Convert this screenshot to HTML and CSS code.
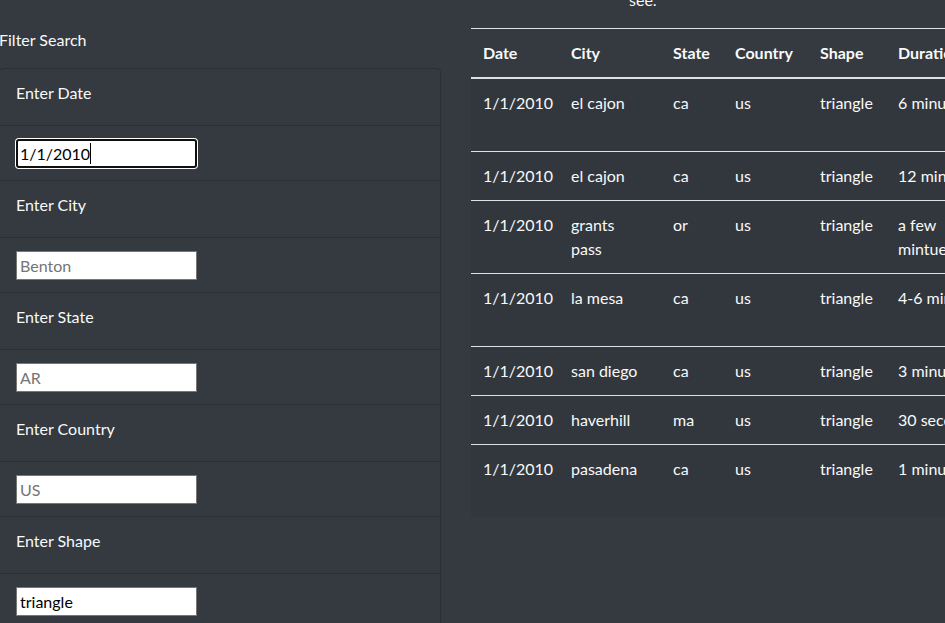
FILE: index.html
```html
<!DOCTYPE html>
<html lang="en">
<head>
<meta charset="utf-8">
<title>UFO Sightings</title>
<link rel="stylesheet" href="styles.css">
</head>
<body>
<div class="page">
  <aside class="filters">
    <p class="filter-title">Filter Search</p>
    <ul class="list">
      <li class="item label">Enter Date</li>
      <li class="item field">
        <span class="field-wrap"><input class="inp focused" type="text" value="1/1/2010"><span class="caret"></span></span>
      </li>
      <li class="item label">Enter City</li>
      <li class="item field"><input class="inp" type="text" placeholder="Benton"></li>
      <li class="item label">Enter State</li>
      <li class="item field"><input class="inp" type="text" placeholder="AR"></li>
      <li class="item label">Enter Country</li>
      <li class="item field"><input class="inp" type="text" placeholder="US"></li>
      <li class="item label">Enter Shape</li>
      <li class="item field"><input class="inp" type="text" value="triangle"></li>
      <li class="item field"><button class="btn">Filter Table</button></li>
    </ul>
  </aside>
  <main class="results">
    <p class="intro">see.</p>
    <table class="ufo">
      <colgroup>
        <col class="c-date"><col class="c-city"><col class="c-state"><col class="c-country"><col class="c-shape"><col class="c-dur"><col class="c-com">
      </colgroup>
      <thead>
        <tr><th>Date</th><th>City</th><th>State</th><th>Country</th><th>Shape</th><th>Duration</th><th>Comments</th></tr>
      </thead>
      <tbody>
        <tr><td>1/1/2010</td><td>el cajon</td><td>ca</td><td>us</td><td>triangle</td><td>6 minutes</td><td>Three red lights in a triangle formation hovering over the mountains</td></tr>
        <tr><td>1/1/2010</td><td>el cajon</td><td>ca</td><td>us</td><td>triangle</td><td>12 minutes</td><td>Orange triangle of lights</td></tr>
        <tr><td>1/1/2010</td><td>grants pass</td><td>or</td><td>us</td><td>triangle</td><td>a few mintues</td><td>Bright lights</td></tr>
        <tr><td>1/1/2010</td><td>la mesa</td><td>ca</td><td>us</td><td>triangle</td><td>4-6 minutes</td><td>Triangular craft with red lights moving slowly to the east</td></tr>
        <tr><td>1/1/2010</td><td>san diego</td><td>ca</td><td>us</td><td>triangle</td><td>3 minutes</td><td>Red lights in sky</td></tr>
        <tr><td>1/1/2010</td><td>haverhill</td><td>ma</td><td>us</td><td>triangle</td><td>30 seconds</td><td>Silent triangle</td></tr>
        <tr><td>1/1/2010</td><td>pasadena</td><td>ca</td><td>us</td><td>triangle</td><td>1 minute</td><td>Three orange lights in a triangle shape moving across the night sky</td></tr>
      </tbody>
    </table>
  </main>
</div>
</body>
</html>
```
FILE: styles.css
```css
html, body {
  margin: 0;
  padding: 0;
}
body {
  background: #343a40;
  color: #f8f9fa;
  font-family: Lato, "Noto Sans", "Liberation Sans", sans-serif;
  font-size: 16px;
  line-height: 1.5;
  overflow: hidden;
}
.page {
  display: flex;
  align-items: flex-start;
  gap: 30px;
  margin: -12px 0 0 -1px;
}
.filters {
  flex: none;
  width: 442px;
}
.filter-title {
  margin: 40px 0 16px;
}
.list {
  list-style: none;
  margin: 0;
  padding: 0;
  border: 1px solid #2b3035;
  border-radius: 4px;
}
.item {
  border-bottom: 1px solid #2b3035;
}
.item.label {
  padding: 12px 16px 20px;
}
.item.field {
  padding: 13px 16px 12px;
}
.field-wrap {
  position: relative;
  display: inline-block;
  vertical-align: top;
}
.inp {
  display: block;
  box-sizing: border-box;
  width: 181px;
  height: 29px;
  margin: 0;
  padding: 0 3px;
  border: 1px solid #767676;
  border-radius: 0;
  background: #fff;
  color: #000;
  font-family: inherit;
  font-size: 16px;
}
.inp::placeholder {
  color: #757575;
}
.inp.focused {
  border: 2px solid #101010;
  border-radius: 3px;
  padding: 0 2px;
  outline: none;
  box-shadow: 0 0 0 1px #fff;
}
.caret {
  position: absolute;
  left: 74px;
  top: 4px;
  width: 1px;
  height: 21px;
  background: #000;
}
.btn {
  font-family: inherit;
  font-size: 16px;
}
.results {
  flex: none;
}
.intro {
  margin: 0 0 16px;
  padding-left: 158px;
}
.ufo {
  border-collapse: collapse;
  table-layout: fixed;
  width: 825px;
}
.c-date { width: 88px; }
.c-city { width: 102px; }
.c-state { width: 62px; }
.c-country { width: 85px; }
.c-shape { width: 78px; }
.c-dur { width: 110px; }
.c-com { width: 300px; }
.ufo th,
.ufo td {
  padding: 12px;
  text-align: left;
  vertical-align: top;
  border-top: 1px solid #dee2e6;
}
.ufo th {
  font-weight: 700;
  border-bottom: 2px solid #dee2e6;
}
.ufo tbody tr {
  background: #32373e;
}
.ufo tbody tr:first-child td {
  border-top: 0;
}
```
